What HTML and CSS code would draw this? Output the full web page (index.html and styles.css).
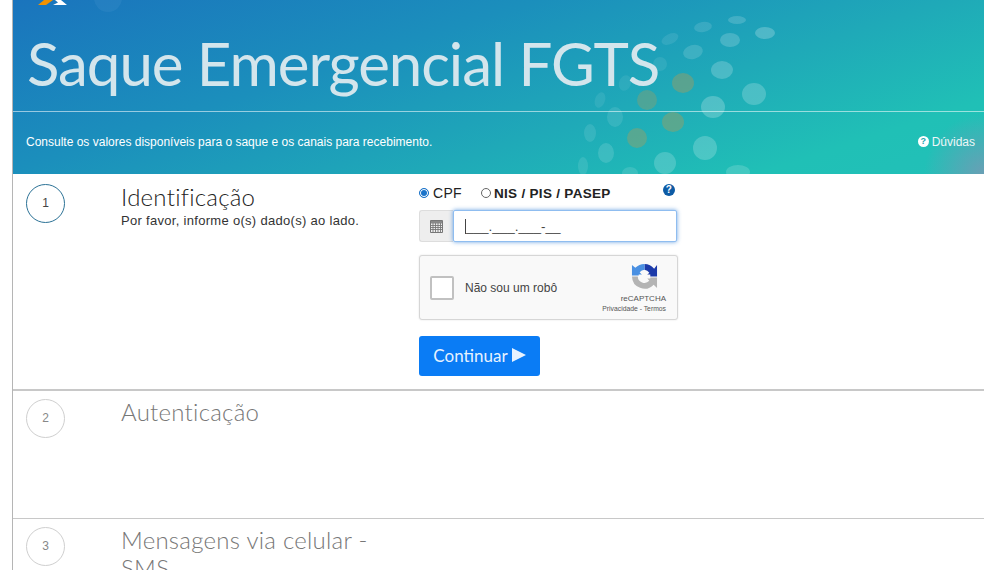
FILE: index.html
```html
<!DOCTYPE html>
<html lang="pt-BR">
<head>
<meta charset="utf-8">
<title>Saque Emergencial FGTS</title>
<link rel="stylesheet" href="styles.css">
</head>
<body>
<div class="page">
  <header class="hero">
    <svg class="dots" width="984" height="174" viewBox="0 0 984 174" aria-hidden="true">
      <g fill="#ffffff">
        <ellipse cx="737" cy="20" rx="9" ry="4" opacity=".16"/>
        <ellipse cx="765" cy="33" rx="10" ry="6" opacity=".22"/>
        <ellipse cx="703" cy="27" rx="9" ry="5" opacity=".12" transform="rotate(-10 703 27)"/>
        <ellipse cx="730" cy="40" rx="10" ry="7" opacity=".18"/>
        <ellipse cx="670" cy="39" rx="9" ry="5" opacity=".09" transform="rotate(-25 670 39)"/>
        <ellipse cx="693" cy="52" rx="10" ry="7" opacity=".14" transform="rotate(-15 693 52)"/>
        <ellipse cx="722" cy="70" rx="11" ry="9" opacity=".2"/>
        <ellipse cx="660" cy="64" rx="7" ry="7" opacity=".08"/>
        <ellipse cx="754" cy="94" rx="12" ry="11" opacity=".2"/>
        <ellipse cx="713" cy="107" rx="12" ry="11" opacity=".22"/>
        <ellipse cx="625" cy="83" rx="6" ry="8" opacity=".07" transform="rotate(20 625 83)"/>
        <ellipse cx="600" cy="100" rx="5" ry="8" opacity=".08" transform="rotate(20 600 100)"/>
        <ellipse cx="615" cy="117" rx="8" ry="10" opacity=".1"/>
        <ellipse cx="590" cy="133" rx="6" ry="9" opacity=".1"/>
        <ellipse cx="606" cy="153" rx="8" ry="10" opacity=".13"/>
        <ellipse cx="705" cy="148" rx="12" ry="12" opacity=".2"/>
        <ellipse cx="665" cy="163" rx="11" ry="11" opacity=".18"/>
        <ellipse cx="583" cy="166" rx="5" ry="9" opacity=".1"/>
        <ellipse cx="630" cy="173" rx="8" ry="6" opacity=".12"/>
        <ellipse cx="738" cy="172" rx="12" ry="7" opacity=".16"/>
      </g>
      <g fill="#b99a50">
        <ellipse cx="683" cy="83" rx="11" ry="10" opacity=".38"/>
        <ellipse cx="647" cy="100" rx="10" ry="10" opacity=".3"/>
        <ellipse cx="673" cy="122" rx="11" ry="10" opacity=".38"/>
        <ellipse cx="637" cy="138" rx="10" ry="10" opacity=".36"/>
      </g>
    </svg>
    <svg class="logo" width="90" height="16" viewBox="0 0 90 16" aria-hidden="true">
      <circle cx="70" cy="-2" r="14" fill="#3a8cc9" opacity=".35"/>
      <path d="M0 5H8L15 0H6Z" fill="#f39200"/>
      <path d="M15 5H29L23 0H17L20 2.500Z" fill="#ffffff"/>
    </svg>
    <h1 class="hero-title">Saque Emergencial FGTS</h1>
    <div class="hero-bar">
      <p class="hero-text">Consulte os valores disponíveis para o saque e os canais para recebimento.</p>
      <a class="hero-help"><span class="help-dot">?</span>Dúvidas</a>
    </div>
  </header>

  <section class="step step-active">
    <div class="step-num num-active">1</div>
    <div class="step-info">
      <h2 class="step-title title-active">Identificação</h2>
      <p class="step-desc">Por favor, informe o(s) dado(s) ao lado.</p>
    </div>
    <form class="step-form">
      <div class="radios">
        <label class="radio radio-on"><span class="radio-mark mark-on"></span>CPF</label>
        <label class="radio radio-off"><span class="radio-mark"></span>NIS / PIS / PASEP</label>
        <span class="info-dot">?</span>
      </div>
      <div class="input-group">
        <span class="input-addon">
          <svg width="13" height="13" viewBox="0 0 13 13" aria-hidden="true">
            <path d="M.5.5h12v12H.5z" fill="#eee" stroke="#777"/>
            <path d="M1 1h11v2.500H1z" fill="#888"/>
            <path d="M1 5.500h11M1 7.500h11M1 9.500h11M3 3v9.500M5.500 3v9.500M8 3v9.500M10.500 3v9.500" stroke="#777" stroke-width=".9"/>
          </svg>
        </span>
        <div class="input-field"><span class="caret"></span>___.___.___-__</div>
      </div>
      <div class="captcha">
        <span class="captcha-box"></span>
        <span class="captcha-label">Não sou um robô</span>
        <div class="captcha-brand">
          <svg width="27" height="27" viewBox="0 0 28 28" aria-hidden="true">
            <path d="M14 1A13 13 0 0 1 24 6L27 2V14H15L19 10A7 7 0 0 0 14 7Z" fill="#1c3aa9"/>
            <path d="M14 1V7A7 7 0 0 0 9 9.500L12 13H1V2L4.500 5A13 13 0 0 1 14 1Z" fill="#4a90e2"/>
            <path d="M1 14H7A7 7 0 0 0 19 18.500L16 15H27V26L23.500 22.500A13 13 0 0 1 1 14Z" fill="#b4b4b4"/>
            <path d="M8 12h3.500a2.500 2.500 0 0 1 5 0H20v4h-3a2.500 2.500 0 0 1-5 0H8Z" fill="#f9f9f9"/>
          </svg>
          <span class="brand-name">reCAPTCHA</span>
          <span class="brand-links">Privacidade - Termos</span>
        </div>
      </div>
      <button class="continue" type="button">Continuar <span class="play"></span></button>
    </form>
  </section>

  <section class="step step-auth">
    <div class="step-num">2</div>
    <div class="step-info">
      <h2 class="step-title">Autenticação</h2>
    </div>
  </section>

  <section class="step step-sms">
    <div class="step-num">3</div>
    <div class="step-info">
      <h2 class="step-title">Mensagens via celular - SMS</h2>
    </div>
  </section>
</div>
</body>
</html>
```
FILE: styles.css
```css
html, body {
  margin: 0;
  height: 570px;
  overflow: hidden;
  background: #fff;
}
body {
  font-family: "Liberation Sans", Arial, sans-serif;
  color: #333;
}
.page {
  margin-left: 12px;
  border-left: 1px solid #b5b5b5;
  height: 570px;
  overflow: hidden;
}
.hero {
  position: relative;
  height: 174px;
  overflow: hidden;
  box-sizing: border-box;
  background:
    radial-gradient(circle at 100% 100%, #6a9fb5 0, rgba(106,159,181,0) 60px),
    linear-gradient(162deg, #1a74bd 0%, #1b8fbc 35%, #1fa9b8 62%, #20c0b6 85%, #22c0b8 100%);
}
.dots {
  position: absolute;
  left: -13px;
  top: 0;
}
.logo {
  position: absolute;
  left: 25px;
  top: 0;
}
.hero-title {
  position: relative;
  margin: 0;
  height: 112px;
  box-sizing: border-box;
  padding: 26px 0 0 14px;
  border-bottom: 1px solid rgba(255,255,255,.55);
  font-family: Lato, sans-serif;
  font-weight: 400;
  font-size: 60px;
  line-height: 74px;
  letter-spacing: -1.05px;
  color: #d3e5ec;
  white-space: nowrap;
}
.hero-bar {
  position: relative;
  display: flex;
  justify-content: space-between;
  align-items: center;
  box-sizing: border-box;
  height: 61px;
  padding: 0 9px 2px 13px;
}
.hero-text {
  margin: 0;
  font-size: 12px;
  color: #fff;
}
.hero-help {
  display: flex;
  align-items: center;
  gap: 3px;
  font-size: 12px;
  color: #eef6f7;
}
.help-dot {
  width: 11px;
  height: 11px;
  border-radius: 50%;
  background: #fff;
  color: #22a5b0;
  font-size: 9px;
  font-weight: 700;
  line-height: 11px;
  text-align: center;
}
.step {
  display: grid;
  grid-template-columns: 95px 298px 1fr;
  box-sizing: border-box;
  padding-left: 13px;
}
.step-active {
  height: 217px;
  padding-top: 10px;
  border-bottom: 2px solid #c8c8c8;
}
.step-auth {
  height: 128px;
  padding-top: 8px;
  border-bottom: 1px solid #c8c8c8;
}
.step-sms {
  padding-top: 8px;
}
.step-num {
  width: 39px;
  height: 39px;
  box-sizing: border-box;
  border: 1px solid #cfcfcf;
  border-radius: 50%;
  font-size: 12px;
  line-height: 37px;
  text-align: center;
  color: #888;
}
.num-active {
  border-color: #2c7296;
  color: #444;
}
.step-info {
  grid-column: 2;
}
.step-title {
  margin: -1px 0 0;
  width: 265px;
  font-family: Lato, sans-serif;
  font-weight: 300;
  font-size: 24px;
  line-height: 28px;
  letter-spacing: .25px;
  color: #777;
}
.title-active {
  color: #222;
}
.step-desc {
  margin: 2px 0 0;
  font-size: 13px;
  line-height: 16px;
  letter-spacing: .3px;
  color: #333;
}
.step-form {
  grid-column: 3;
  width: 260px;
}
.radios {
  position: relative;
  display: flex;
  align-items: center;
  height: 18px;
  font-size: 14px;
  letter-spacing: .3px;
  color: #222;
}
.radio {
  display: flex;
  align-items: center;
  gap: 4px;
}
.radio-on {
  width: 62px;
}
.radio-off {
  gap: 3px;
  font-weight: 700;
  font-size: 13.500px;
}
.radio-mark {
  width: 10px;
  height: 10px;
  box-sizing: border-box;
  border: 1px solid #666;
  border-radius: 50%;
  background: #fff;
}
.mark-on {
  border: 1px solid #1a73c9;
  box-shadow: inset 0 0 0 1px #fff;
  background: #1a73c9;
}
.info-dot {
  position: absolute;
  left: 244px;
  top: 0;
  width: 12px;
  height: 12px;
  border-radius: 50%;
  background: #0d5ba5;
  color: #fff;
  font-size: 10px;
  font-weight: 700;
  line-height: 12px;
  text-align: center;
}
.input-group {
  display: flex;
  height: 32px;
  margin-top: 8px;
  width: 258px;
}
.input-addon {
  display: flex;
  align-items: center;
  justify-content: center;
  width: 34px;
  box-sizing: border-box;
  border: 1px solid #ddd;
  border-right: 0;
  border-radius: 3px 0 0 3px;
  background: #eee;
}
.input-field {
  flex: 1;
  display: flex;
  align-items: center;
  box-sizing: border-box;
  padding-left: 11px;
  border: 1px solid #8fbdf0;
  border-radius: 2px;
  box-shadow: 0 0 4px rgba(70,140,220,.8);
  background: #fff;
  font-size: 13.500px;
  color: #444;
}
.caret {
  width: 1px;
  height: 15px;
  background: #444;
}
.captcha {
  display: flex;
  align-items: center;
  box-sizing: border-box;
  width: 259px;
  height: 65px;
  margin-top: 13px;
  padding: 0 11px 0 10px;
  border: 1px solid #d6d6d6;
  border-radius: 3px;
  background: #f9f9f9;
  box-shadow: 0 0 2px rgba(0,0,0,.12);
}
.captcha-box {
  width: 24px;
  height: 24px;
  box-sizing: border-box;
  border: 2px solid #c1c1c1;
  border-radius: 2px;
  background: #fff;
}
.captcha-label {
  margin-left: 11px;
  font-size: 12px;
  color: #444;
}
.captcha-brand {
  display: flex;
  flex-direction: column;
  align-items: flex-end;
  margin-left: auto;
}
.captcha-brand svg {
  margin-right: 8px;
}
.brand-name {
  margin-top: 3px;
  font-size: 8px;
  line-height: 11px;
  color: #555;
}
.brand-links {
  font-size: 6.800px;
  line-height: 9px;
  white-space: nowrap;
  color: #555;
}
.continue {
  display: flex;
  align-items: center;
  justify-content: center;
  gap: 4px;
  width: 121px;
  height: 40px;
  margin-top: 16px;
  padding: 0 0 2px;
  border: 0;
  border-radius: 3px;
  background: #0a7cf5;
  color: #e6f2ff;
  font-family: Lato, sans-serif;
  font-size: 17px;
}
.play {
  width: 0;
  height: 0;
  border-left: 14px solid #e6f2ff;
  border-top: 7.500px solid transparent;
  border-bottom: 7.500px solid transparent;
}
```
